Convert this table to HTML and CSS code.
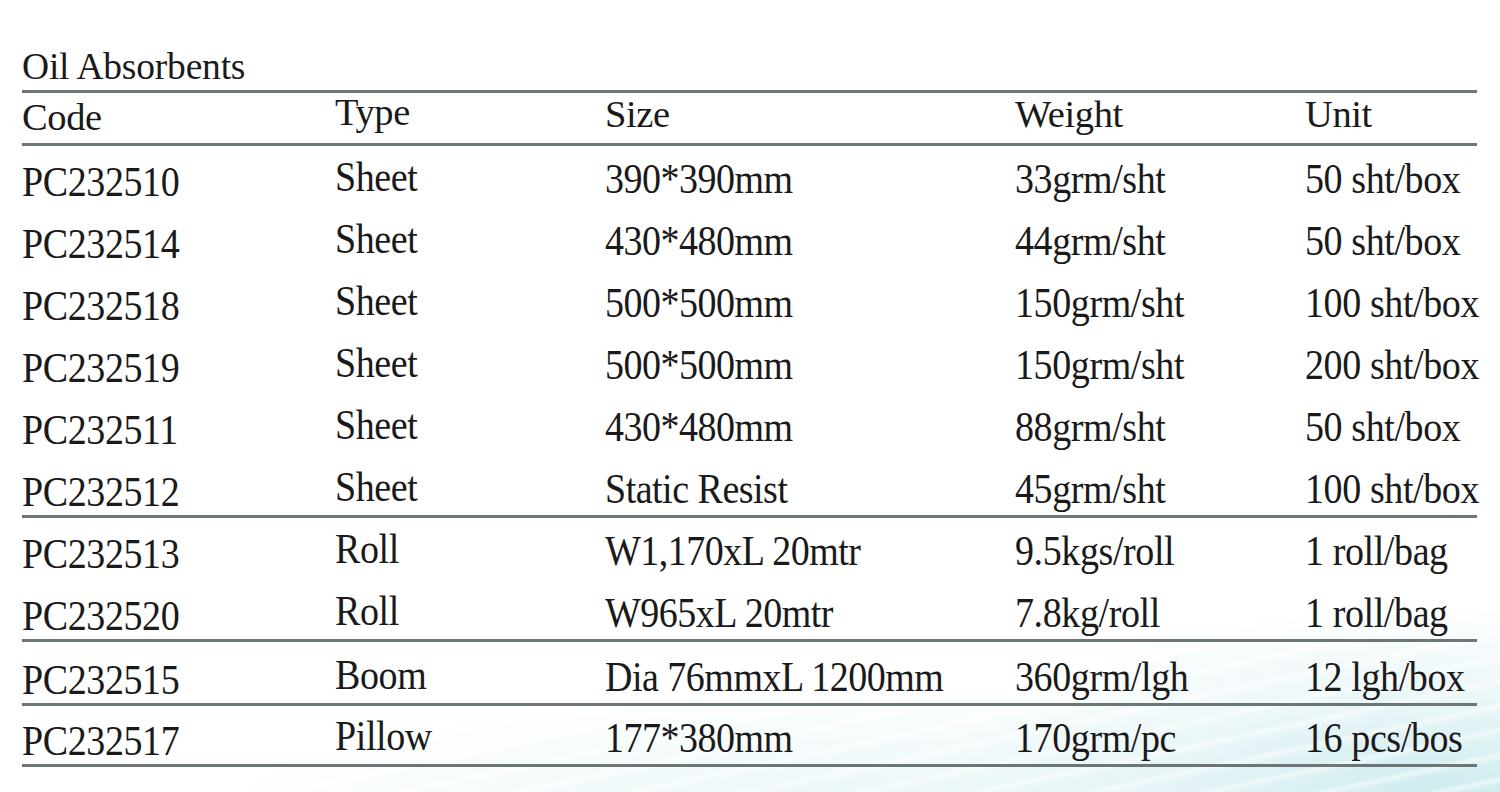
FILE: index.html
```html
<!DOCTYPE html>
<html>
<head>
<meta charset="utf-8">
<link rel="stylesheet" href="styles.css">
</head>
<body>
<div class="sheet">
  <div class="title"><span>Oil Absorbents</span></div>
  <div class="row head">
    <div class="c code"><span>Code</span></div>
    <div class="c type"><span>Type</span></div>
    <div class="c size"><span>Size</span></div>
    <div class="c weight"><span>Weight</span></div>
    <div class="c unit"><span>Unit</span></div>
  </div>
  <div class="row data">
    <div class="c code"><span>PC232510</span></div>
    <div class="c type"><span>Sheet</span></div>
    <div class="c size"><span>390*390mm</span></div>
    <div class="c weight"><span>33grm/sht</span></div>
    <div class="c unit"><span>50 sht/box</span></div>
  </div>
  <div class="row data">
    <div class="c code"><span>PC232514</span></div>
    <div class="c type"><span>Sheet</span></div>
    <div class="c size"><span>430*480mm</span></div>
    <div class="c weight"><span>44grm/sht</span></div>
    <div class="c unit"><span>50 sht/box</span></div>
  </div>
  <div class="row data">
    <div class="c code"><span>PC232518</span></div>
    <div class="c type"><span>Sheet</span></div>
    <div class="c size"><span>500*500mm</span></div>
    <div class="c weight"><span>150grm/sht</span></div>
    <div class="c unit"><span>100 sht/box</span></div>
  </div>
  <div class="row data">
    <div class="c code"><span>PC232519</span></div>
    <div class="c type"><span>Sheet</span></div>
    <div class="c size"><span>500*500mm</span></div>
    <div class="c weight"><span>150grm/sht</span></div>
    <div class="c unit"><span>200 sht/box</span></div>
  </div>
  <div class="row data">
    <div class="c code"><span>PC232511</span></div>
    <div class="c type"><span>Sheet</span></div>
    <div class="c size"><span>430*480mm</span></div>
    <div class="c weight"><span>88grm/sht</span></div>
    <div class="c unit"><span>50 sht/box</span></div>
  </div>
  <div class="row data ruled">
    <div class="c code"><span>PC232512</span></div>
    <div class="c type"><span>Sheet</span></div>
    <div class="c size"><span>Static Resist</span></div>
    <div class="c weight"><span>45grm/sht</span></div>
    <div class="c unit"><span>100 sht/box</span></div>
  </div>
  <div class="row data">
    <div class="c code"><span>PC232513</span></div>
    <div class="c type"><span>Roll</span></div>
    <div class="c size"><span>W1,170xL 20mtr</span></div>
    <div class="c weight"><span>9.5kgs/roll</span></div>
    <div class="c unit"><span>1 roll/bag</span></div>
  </div>
  <div class="row data ruled">
    <div class="c code"><span>PC232520</span></div>
    <div class="c type"><span>Roll</span></div>
    <div class="c size"><span>W965xL 20mtr</span></div>
    <div class="c weight"><span>7.8kg/roll</span></div>
    <div class="c unit"><span>1 roll/bag</span></div>
  </div>
  <div class="row data ruled tall">
    <div class="c code"><span>PC232515</span></div>
    <div class="c type"><span>Boom</span></div>
    <div class="c size"><span>Dia 76mmxL 1200mm</span></div>
    <div class="c weight"><span>360grm/lgh</span></div>
    <div class="c unit"><span>12 lgh/box</span></div>
  </div>
  <div class="row data ruled short">
    <div class="c code"><span>PC232517</span></div>
    <div class="c type"><span>Pillow</span></div>
    <div class="c size"><span>177*380mm</span></div>
    <div class="c weight"><span>170grm/pc</span></div>
    <div class="c unit"><span>16 pcs/bos</span></div>
  </div>
</div>
</body>
</html>
```
FILE: styles.css
```css
html, body {
  margin: 0;
  padding: 0;
}
body {
  width: 1500px;
  height: 792px;
  overflow: hidden;
  background-color: #ffffff;
  background-image:
    repeating-linear-gradient(168deg, rgba(255,255,255,0) 0px, rgba(255,255,255,0) 14px, rgba(255,255,255,0.55) 18px, rgba(255,255,255,0) 24px),
    radial-gradient(ellipse 520px 200px at 1450px 800px, rgba(196,232,236,0.85), rgba(214,238,241,0.45) 55%, rgba(255,255,255,0) 100%),
    radial-gradient(ellipse 700px 120px at 900px 810px, rgba(214,238,242,0.55), rgba(255,255,255,0) 100%);
  font-family: "Liberation Serif", "Times New Roman", serif;
  color: #1a1a1a;
}
.sheet {
  display: flex;
  flex-direction: column;
  margin-left: 22px;
  width: 1455px;
}
.title {
  height: 93px;
  box-sizing: border-box;
  display: flex;
  align-items: flex-end;
  padding-bottom: 5px;
  border-bottom: 3px solid #6c7676;
  font-size: 37.5px;
  line-height: 37px;
}
.title span {
  display: inline-block;
  letter-spacing: -0.2px;
}
.row {
  display: flex;
  box-sizing: border-box;
  height: 62px;
  align-items: flex-end;
  padding-bottom: 6px;
  font-size: 37px;
  line-height: 37px;
}
.row.head {
  height: 53px;
  padding-bottom: 7px;
  border-bottom: 3px solid #6c7676;
  font-size: 38.5px;
}
.row.ruled {
  border-bottom: 3px solid #6c7676;
  padding-bottom: 3px;
}
.row.tall {
  height: 64px;
}
.row.short {
  height: 61px;
}
.c {
  flex: none;
}
.c span {
  display: inline-block;
  letter-spacing: -0.4px;
  white-space: nowrap;
}
.data .c span {
  font-size: 38px;
  transform: scaleY(1.1);
  transform-origin: 0 31px;
}
.code { width: 313px; }
.type { width: 270px; }
.size { width: 410px; }
.weight { width: 290px; }
.unit { width: 172px; }
.type span { position: relative; top: -5px; }
.size span, .weight span, .unit span { position: relative; top: -3px; }
.data .size span { letter-spacing: -0.5px; }
```
